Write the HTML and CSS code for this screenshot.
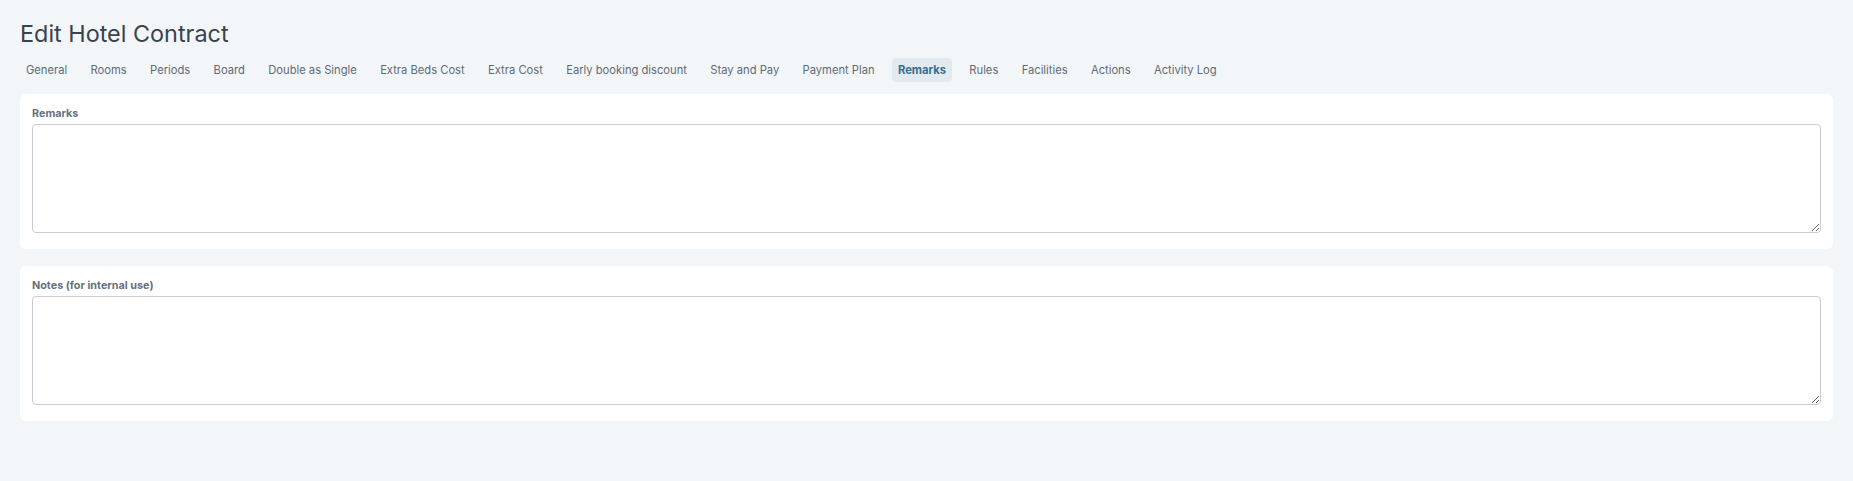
FILE: index.html
```html
<!DOCTYPE html>
<html lang="en">
<head>
<meta charset="utf-8">
<title>Edit Hotel Contract</title>
<link rel="stylesheet" href="styles.css">
</head>
<body>
<div class="page">
  <h1 class="title">Edit Hotel Contract</h1>
  <nav class="tabs">
    <a class="tab">General</a>
    <a class="tab">Rooms</a>
    <a class="tab">Periods</a>
    <a class="tab">Board</a>
    <a class="tab">Double as Single</a>
    <a class="tab">Extra Beds Cost</a>
    <a class="tab">Extra Cost</a>
    <a class="tab">Early booking discount</a>
    <a class="tab">Stay and Pay</a>
    <a class="tab">Payment Plan</a>
    <a class="tab active">Remarks</a>
    <a class="tab">Rules</a>
    <a class="tab">Facilities</a>
    <a class="tab">Actions</a>
    <a class="tab">Activity Log</a>
  </nav>
  <section class="card">
    <label class="label">Remarks</label>
    <textarea class="area"></textarea>
  </section>
  <section class="card">
    <label class="label">Notes (for internal use)</label>
    <textarea class="area"></textarea>
  </section>
</div>
</body>
</html>
```
FILE: styles.css
```css
html, body {
  margin: 0;
  padding: 0;
  background: #f3f6f9;
  font-family: Inter, "Noto Sans", sans-serif;
}
.page {
  padding: 21px 20px 20px 20px;
  display: flex;
  flex-direction: column;
}
.title {
  margin: 0;
  font-size: 23.4px;
  font-weight: 400;
  line-height: 26px;
  color: #38434d;
}
.tabs {
  display: flex;
  gap: 11.35px;
  margin-top: 11px;
  margin-bottom: 12px;
}
.tab {
  padding: 5px 6px;
  font-size: 11.2px;
  line-height: 14px;
  color: #5e6a76;
  border-radius: 4px;
  cursor: pointer;
}
.tab.active {
  background: #e2e9ef;
  color: #386d8d;
  font-weight: 700;
}
.card {
  background: #ffffff;
  border-radius: 6px;
  padding: 13px 12px 16px 12px;
  margin-bottom: 17px;
  display: flex;
  flex-direction: column;
}
.label {
  font-size: 10.8px;
  line-height: 14px;
  font-weight: 700;
  color: #66727e;
  margin-bottom: 3px;
}
.area {
  display: block;
  height: 109px;
  box-sizing: border-box;
  border: 1px solid #c9ccd0;
  border-radius: 4px;
  background: #fff;
  resize: vertical;
  font-family: inherit;
}
```
